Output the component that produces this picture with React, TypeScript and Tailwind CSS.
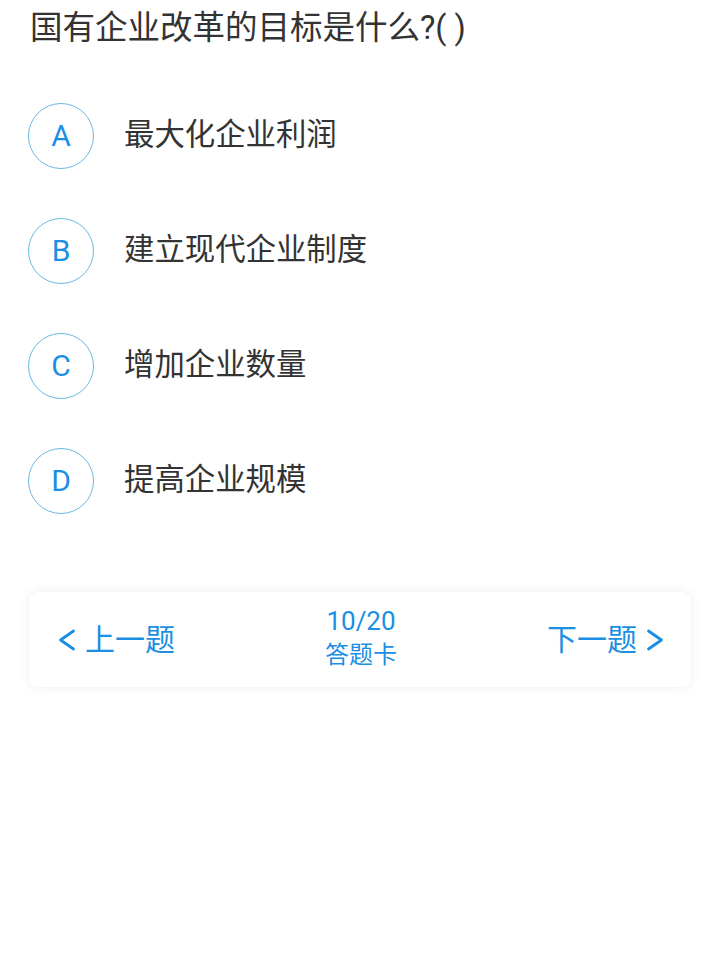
import React from "react";

const options = [
  { key: "A", text: "最大化企业利润" },
  { key: "B", text: "建立现代企业制度" },
  { key: "C", text: "增加企业数量" },
  { key: "D", text: "提高企业规模" },
];

function Chevron({ dir }: { dir: "left" | "right" }) {
  return (
    <svg width="18" height="24" viewBox="0 0 18 24" fill="none">
      <polyline
        points={dir === "left" ? "15.5,3 2.5,12 15.5,21" : "2.5,3 15.5,12 2.5,21"}
        stroke="#1b8fe3"
        strokeWidth="2.8"
        strokeLinecap="round"
        strokeLinejoin="round"
      />
    </svg>
  );
}

export default function App() {
  return (
    <div
      className="min-h-[960px] w-[720px] bg-white"
      style={{ fontFamily: "Roboto, 'Noto Sans CJK SC', sans-serif" }}
    >
      <h1 className="pl-[30px] pt-[8px] text-[32.5px] leading-[40px] font-normal text-[#333333]">
        国有企业改革的目标是什么?( )
      </h1>

      <ul className="mt-[30px]">
        {options.map((o) => (
          <li key={o.key} className="flex h-[115px] items-center pl-[28px]">
            <span className="flex h-[66px] w-[66px] items-center justify-center rounded-full border border-[#6cb9e3] text-[30px] text-[#1b8fe3]">
              {o.key}
            </span>
            <span className="ml-[30px] text-[30.4px] leading-none text-[#333333]">
              {o.text}
            </span>
          </li>
        ))}
      </ul>

      <div className="mx-[29px] mt-[54px] flex h-[95px] items-center justify-between rounded-[10px] bg-white pl-[29px] pr-[27px] shadow-[0_0_12px_rgba(0,0,0,0.07)]">
        <button className="flex items-center gap-[9px] text-[30px] text-[#1b8fe3]">
          <Chevron dir="left" />
          <span>上一题</span>
        </button>
        <div className="flex flex-col items-center pb-[3px] text-[#1b8fe3]">
          <span className="text-[26px] leading-[34px]">10/20</span>
          <span className="text-[24px] leading-[34px]">答题卡</span>
        </div>
        <button className="flex items-center gap-[9px] text-[30px] text-[#1b8fe3]">
          <span>下一题</span>
          <Chevron dir="right" />
        </button>
      </div>
    </div>
  );
}
